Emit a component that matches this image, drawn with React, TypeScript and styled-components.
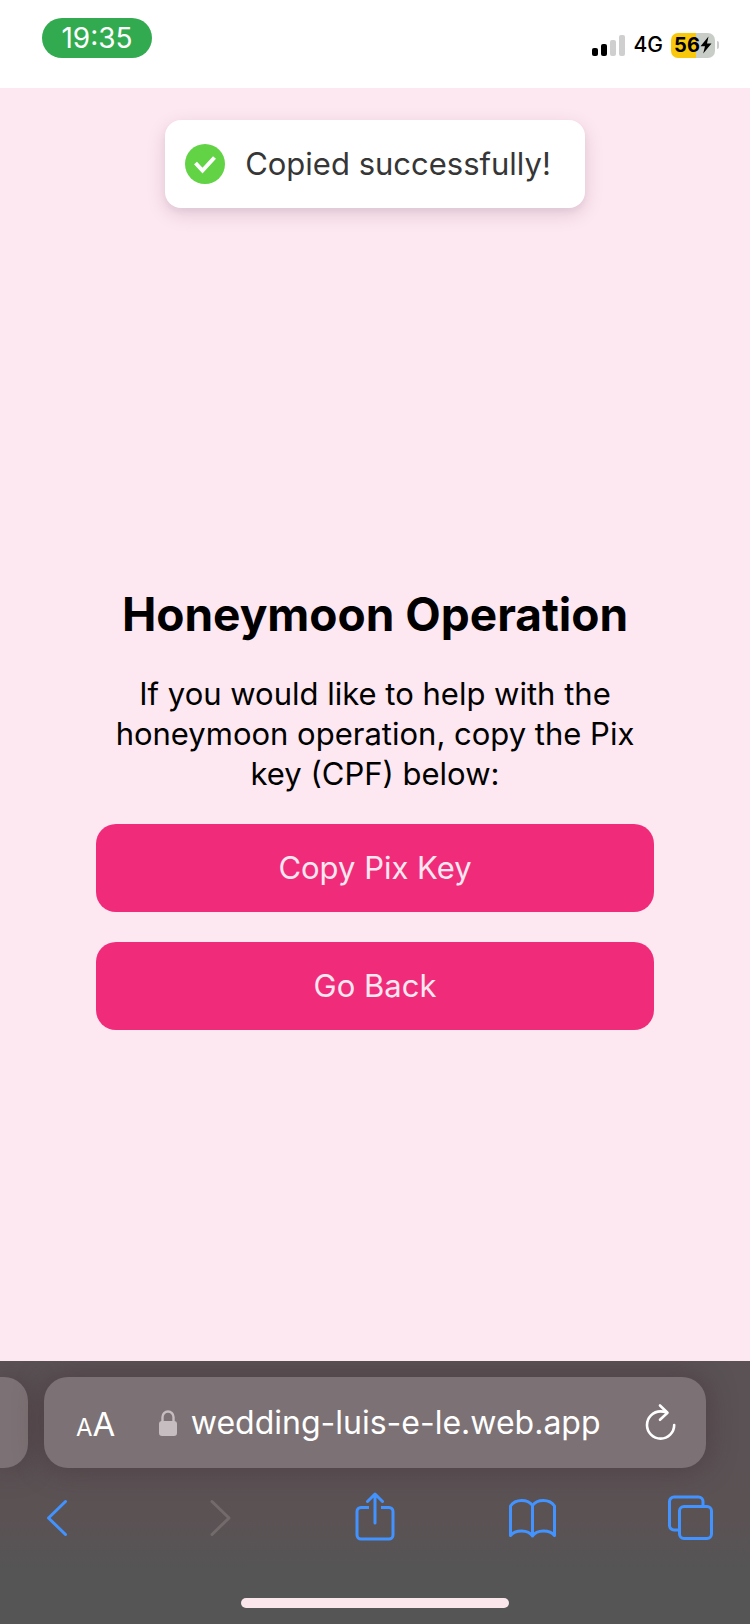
import React from "react";
import styled, { createGlobalStyle } from "styled-components";

const GlobalStyle = createGlobalStyle`
  *, *::before, *::after { box-sizing: border-box; }
  body {
    margin: 0;
    background: #fde7f0;
    font-family: Inter, "Liberation Sans", sans-serif;
    color: #000;
  }
  button { border: 0; padding: 0; margin: 0; background: none; font: inherit; color: inherit; cursor: pointer; }
  svg { display: block; }
`;

const Screen = styled.div`
  min-height: 100vh;
  display: flex;
  flex-direction: column;
`;

const StatusBar = styled.header`
  height: 88px;
  padding: 18px 31px 0 42px;
  display: flex;
  align-items: flex-start;
  justify-content: space-between;
  background: #fff;
`;

const TimePill = styled.time`
  width: 110px;
  height: 40px;
  border-radius: 20px;
  display: flex;
  align-items: center;
  justify-content: center;
  background: #32ab50;
  color: #fff;
  font-size: 28px;
  line-height: 40px;
`;

const StatusIcons = styled.div`
  height: 54px;
  display: flex;
  align-items: center;
  gap: 8px;
`;

const Network = styled.span`
  font-size: 21px;
  line-height: 24px;
  font-weight: 500;
`;

const Battery = styled.div`
  display: flex;
  align-items: center;
  gap: 2px;
  &::after {
    content: "";
    width: 2px;
    height: 8px;
    border-radius: 0 2px 2px 0;
    background: #cdcdcd;
  }
`;

const BatteryBody = styled.div<{ $level: number }>`
  width: 44px;
  height: 25px;
  border-radius: 7px;
  display: flex;
  align-items: center;
  justify-content: center;
  background: linear-gradient(to right, #f7c80c ${(p) => p.$level}%, #c9cdc8 ${(p) => p.$level}%);
  font-size: 20px;
  line-height: 25px;
  font-weight: 700;
`;

const Page = styled.main`
  flex: 1;
  display: flex;
  flex-direction: column;
  align-items: center;
  padding: 32px 96px 0;
`;

const Toast = styled.div`
  height: 88px;
  margin-bottom: 44px;
  padding: 0 34px 0 20px;
  border-radius: 16px;
  display: flex;
  align-items: center;
  gap: 20px;
  background: #fff;
  color: #363636;
  box-shadow: 0 6px 20px rgba(60, 20, 60, 0.12), 0 4px 6px rgba(60, 20, 60, 0.06);
  font-size: 31px;
  line-height: 40px;
  white-space: nowrap;
`;

const Content = styled.section`
  flex: 1;
  width: 100%;
  display: flex;
  flex-direction: column;
  justify-content: center;
  text-align: center;
`;

const Title = styled.h1`
  margin: 0 0 30px;
  font-size: 46px;
  line-height: 60px;
  font-weight: 700;
`;

const Description = styled.p`
  margin: 0 0 30px;
  padding: 0 16px;
  font-size: 31px;
  line-height: 40px;
`;

const Actions = styled.div`
  display: flex;
  flex-direction: column;
  gap: 30px;
`;

const ActionButton = styled.button`
  height: 88px;
  border-radius: 20px;
  background: #f02c7a;
  color: #fde7f0;
  font-size: 31px;
  line-height: 40px;
`;

const BrowserBar = styled.footer`
  padding: 16px 0;
  overflow: hidden;
  background: linear-gradient(#5a5255, #5b5254 60%, #555 80%);
`;

const AddressRow = styled.div`
  display: flex;
  gap: 16px;
  padding-right: 44px;
`;

const TabPeek = styled.div`
  width: 28px;
  height: 91px;
  border-radius: 0 24px 24px 0;
  background: #7c7174;
  box-shadow: 0 0 28px rgba(66, 44, 52, 0.5);
`;

const AddressBar = styled.div`
  flex: 1;
  height: 91px;
  padding: 0 28px 0 32px;
  border-radius: 24px;
  display: flex;
  align-items: center;
  background: #7c7174;
  color: #fff;
  box-shadow: 0 0 28px rgba(66, 44, 52, 0.5);
`;

const TextSizeButton = styled.button`
  padding-top: 6px;
  display: flex;
  align-items: baseline;
  font-size: 33px;
  line-height: 40px;
  small { font-size: 24px; }
`;

const Address = styled.button`
  flex: 1;
  display: flex;
  align-items: center;
  justify-content: center;
  gap: 14px;
  font-size: 32px;
  line-height: 40px;
`;

const IconButton = styled.button`
  display: flex;
  color: #4293ff;
  &:disabled { color: #736b6b; cursor: default; }
`;

const ReloadButton = styled(IconButton)`
  color: #fff;
`;

const Toolbar = styled.nav`
  display: flex;
  justify-content: space-between;
  padding: 24px 36px 56px;
`;

const HomeIndicator = styled.div`
  width: 268px;
  height: 10px;
  margin: 0 auto;
  border-radius: 5px;
  background: #fae6eb;
`;

const SignalIcon = () => (
  <svg width="34" height="22" viewBox="0 0 34 22" aria-hidden="true">
    <rect x="0" y="14" width="6" height="8" rx="2" fill="#000" />
    <rect x="9" y="10" width="6" height="12" rx="2" fill="#000" />
    <rect x="18" y="6" width="6" height="16" rx="2" fill="#cfcfcf" />
    <rect x="27" y="1" width="6" height="21" rx="2" fill="#cfcfcf" />
  </svg>
);

const BoltIcon = () => (
  <svg width="12" height="18" viewBox="0 0 12 18" aria-hidden="true">
    <path d="M8.5 0.5 0.5 10.3H5L3.2 17.5 11.5 7.5H7Z" fill="#000" />
  </svg>
);

const SuccessIcon = () => (
  <svg width="40" height="40" viewBox="0 0 40 40" aria-hidden="true">
    <circle cx="20" cy="20" r="20" fill="#61d345" />
    <path d="m10.5 19 7 7.5 12-13" fill="none" stroke="#fff" strokeWidth="4" />
  </svg>
);

const LockIcon = () => (
  <svg width="18" height="26" viewBox="0 0 18 26" aria-hidden="true">
    <rect y="11" width="18" height="15" rx="3" fill="#c6bdc0" />
    <path d="M3.5 12V7a5.5 5.5 0 0 1 11 0v5" fill="none" stroke="#c6bdc0" strokeWidth="2.4" />
  </svg>
);

const ReloadIcon = () => (
  <svg width="34" height="40" viewBox="0 0 34 40" fill="none" stroke="currentColor" strokeWidth="2.6" strokeLinecap="round" strokeLinejoin="round" aria-hidden="true">
    <path d="M30.2 22A13.6 13.6 0 1 1 16.6 8.4q3 0 6.2 1.2" />
    <path d="m16 2.5 7.5 7.3-7.5 7" />
  </svg>
);

const ToolIcon = ({ children }: { children: React.ReactNode }) => (
  <svg width="48" height="50" viewBox="0 0 48 50" fill="none" stroke="currentColor" strokeWidth="3" strokeLinecap="round" strokeLinejoin="round" aria-hidden="true">
    {children}
  </svg>
);

export default function App() {
  return (
    <>
      <GlobalStyle />
      <Screen>
        <StatusBar>
          <TimePill>19:35</TimePill>
          <StatusIcons>
            <SignalIcon />
            <Network>4G</Network>
            <Battery>
              <BatteryBody $level={56}>
                56
                <BoltIcon />
              </BatteryBody>
            </Battery>
          </StatusIcons>
        </StatusBar>

        <Page>
          <Toast role="status">
            <SuccessIcon />
            Copied successfully!
          </Toast>
          <Content>
            <Title>Honeymoon Operation</Title>
            <Description>
              If you would like to help with the honeymoon operation, copy the Pix key (CPF) below:
            </Description>
            <Actions>
              <ActionButton type="button">Copy Pix Key</ActionButton>
              <ActionButton type="button">Go Back</ActionButton>
            </Actions>
          </Content>
        </Page>

        <BrowserBar>
          <AddressRow>
            <TabPeek />
            <AddressBar>
              <TextSizeButton type="button" aria-label="Page settings">
                <small>A</small>A
              </TextSizeButton>
              <Address type="button">
                <LockIcon />
                wedding-luis-e-le.web.app
              </Address>
              <ReloadButton type="button" aria-label="Reload">
                <ReloadIcon />
              </ReloadButton>
            </AddressBar>
          </AddressRow>
          <Toolbar aria-label="Browser">
            <IconButton type="button" aria-label="Back">
              <ToolIcon>
                <path d="M29.5 9.5 12.5 26l17 16.5" />
              </ToolIcon>
            </IconButton>
            <IconButton type="button" aria-label="Forward" disabled>
              <ToolIcon>
                <path d="m18 9.5 17 16.5-17 16.5" />
              </ToolIcon>
            </IconButton>
            <IconButton type="button" aria-label="Share">
              <ToolIcon>
                <path d="M18 15.5H10a4 4 0 0 0-4 4V43a4 4 0 0 0 4 4h28a4 4 0 0 0 4-4V19.5a4 4 0 0 0-4-4H30" strokeLinecap="butt" />
                <path d="M24 31V2.5M16.5 9.5 24 2l7.5 7.5" />
              </ToolIcon>
            </IconButton>
            <IconButton type="button" aria-label="Bookmarks">
              <ToolIcon>
                <path d="M23.5 13.5C19 7 6.5 6.5 1.5 14v29.5c5-6 17.5-6 22 .5 4.500-6.500 17-6.500 22-.5V14C40.5 6.5 28 7 23.5 13.5V44" />
              </ToolIcon>
            </IconButton>
            <IconButton type="button" aria-label="Tabs">
              <ToolIcon>
                <path d="M12.5 38H8a4.5 4.5 0 0 1-4.5-4.5V9.5A4.5 4.5 0 0 1 8 5h24.5A4.5 4.5 0 0 1 37 9.5V14" strokeLinecap="butt" />
                <rect x="13.5" y="14.5" width="32" height="32" rx="4.5" />
              </ToolIcon>
            </IconButton>
          </Toolbar>
          <HomeIndicator />
        </BrowserBar>
      </Screen>
    </>
  );
}
